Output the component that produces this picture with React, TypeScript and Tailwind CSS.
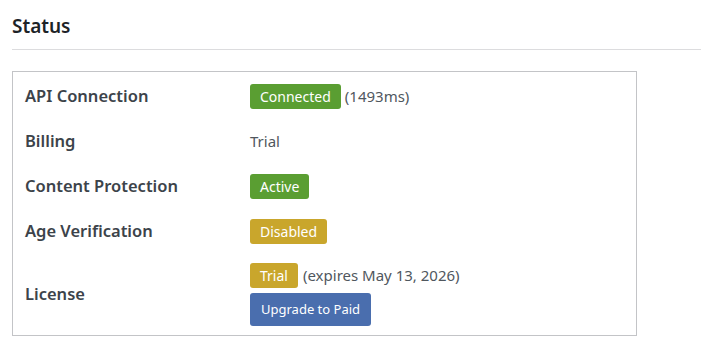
// Status panel (plugin settings page)

const FONT = { fontFamily: '"Noto Sans", "Open Sans", Arial, sans-serif' };

function Badge({ color, children }: { color: "green" | "gold"; children: React.ReactNode }) {
  return (
    <span
      className={`inline-flex items-center h-[25px] px-[10px] rounded-[3px] text-[14px] text-white ${
        color === "green" ? "bg-[#5a9e32]" : "bg-[#c9a62c]"
      }`}
    >
      {children}
    </span>
  );
}

function Row({ label, children, className = "h-[45px]" }: { label: string; children: React.ReactNode; className?: string }) {
  return (
    <div className={`flex items-center ${className}`}>
      <div className="w-[225px] shrink-0 text-[16.5px] font-semibold text-[#3c434a]">{label}</div>
      <div className="flex-1 text-[15px] text-[#50575e]">{children}</div>
    </div>
  );
}

export default function App() {
  return (
    <div className="w-[701px] h-[356px] bg-white px-3 overflow-hidden" style={FONT}>
      <h2 className="pt-[13px] pb-[9px] text-[19px] font-semibold text-[#1d2327] leading-[27px]">Status</h2>
      <div className="h-px bg-[#dcdcde] -mr-3" />

      <div className="mt-[21px] w-[625px] border border-[#c3c4c7] pl-[12px] pt-[2px]">
        <Row label="API Connection">
          <div className="flex items-center gap-[4px]">
            <Badge color="green">Connected</Badge>
            <span>(1493ms)</span>
          </div>
        </Row>
        <Row label="Billing">Trial</Row>
        <Row label="Content Protection">
          <Badge color="green">Active</Badge>
        </Row>
        <Row label="Age Verification">
          <Badge color="gold">Disabled</Badge>
        </Row>
        <Row label="License" className="pt-[9px] pb-[9px]">
          <div className="flex flex-col items-start gap-[5px]">
            <div className="flex items-center gap-[5px]">
              <Badge color="gold">Trial</Badge>
              <span>(expires May 13, 2026)</span>
            </div>
            <button className="h-[33px] px-[11px] rounded-[3px] bg-[#4a6eae] text-white text-[13px]">
              Upgrade to Paid
            </button>
          </div>
        </Row>
      </div>
    </div>
  );
}
